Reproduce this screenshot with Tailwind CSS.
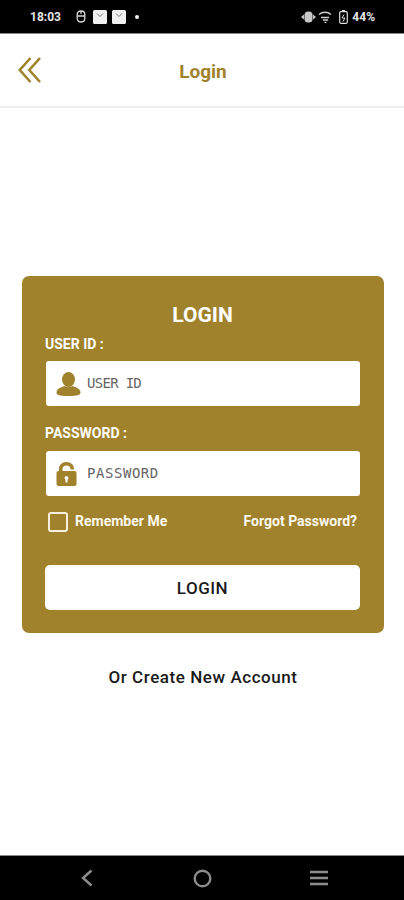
<!DOCTYPE html>
<html lang="en">
<head>
    <meta charset="UTF-8">
    <meta name="viewport" content="width=device-width, initial-scale=1.0">
    <title>Login</title>
    <script src="https://cdn.jsdelivr.net/npm/@tailwindcss/browser@4"></script>
</head>
<body class="bg-white font-['Roboto',sans-serif]">
<div class="flex h-[900px] w-[404px] flex-col overflow-hidden">

    <!-- Status bar -->
    <div class="flex h-[34px] shrink-0 items-center justify-between border-b border-[#8a8a8a] bg-black pr-[29px] pl-[30px] text-[12px] font-bold text-[#e4e4e4]">
        <div class="flex items-center">
            <span class="w-[33px]">18:03</span>
            <svg class="ml-[13px] h-[13px] w-[10px]" viewBox="0 0 10 13" fill="none" stroke="#d8d8d8" stroke-width="1.3"><rect x="1.2" y="1" width="7.6" height="11" rx="3.4"/><path d="M1.2 6h7.6M5 1v3"/></svg>
            <svg class="ml-[7px] h-[14px] w-[14px]" viewBox="0 0 14 14"><rect width="14" height="14" rx="1.5" fill="#f0f0f0"/><path d="M4 3.500l3 3 3-3" fill="none" stroke="#777" stroke-width="1"/></svg>
            <svg class="ml-[5px] h-[14px] w-[14px]" viewBox="0 0 14 14"><rect width="14" height="14" rx="1.5" fill="#f0f0f0"/><path d="M4 3.500l3 3 3-3" fill="none" stroke="#777" stroke-width="1"/></svg>
            <span class="ml-[9px] h-[4px] w-[4px] rounded-full bg-[#eeeeee]"></span>
        </div>
        <div class="flex items-center">
            <svg class="h-[12px] w-[15px]" viewBox="0 0 15 12" fill="#c8c8c8"><path d="M0 6l3-2.500v5zM15 6l-3-2.500v5z"/><rect x="3.500" y="0.500" width="8" height="11" rx="3.500"/></svg>
            <svg class="ml-[2px] h-[12px] w-[14px]" viewBox="0 0 14 12" fill="none" stroke="#d0d0d0" stroke-width="1.400"><path d="M1 3.500C4.500.5 9.500.5 13 3.500M3 6.500h8M5 9h5M6.500 11.500h2"/></svg>
            <svg class="ml-[7px] h-[14px] w-[9px]" viewBox="0 0 9 14" fill="none" stroke="#e0e0e0" stroke-width="1.200"><rect x="0.700" y="1.700" width="7.600" height="11.600" rx="1.200"/><path d="M3 .6h3"/><path d="M5 4.500L3 8h3l-2 3.500" stroke-width="1"/></svg>
            <span class="ml-[4px]">44%</span>
        </div>
    </div>

    <!-- Header -->
    <header class="relative flex h-[74px] shrink-0 items-center justify-center border-b-2 border-[#eeeeee] bg-white pt-[5px] pl-[2px]">
        <svg class="absolute top-[23px] left-[18px] h-[26px] w-[23px]" viewBox="0 0 23 26" fill="none" stroke="#a0822c" stroke-width="2.600">
            <path d="M12.500 1L1.800 13l10.700 12M22 1L11.300 13 22 25"/>
        </svg>
        <h1 class="text-[19px] font-bold text-[#a0822c]">Login</h1>
    </header>

    <main class="flex-1 bg-white pt-[168px] pr-[20px] pl-[22px]">
        <!-- Login card -->
        <div class="h-[357px] rounded-[7px] bg-[#a0822c] pt-[25px] pr-[24px] pl-[23px]">
            <h2 class="text-center text-[21px] leading-[28px] font-bold text-white">LOGIN</h2>

            <label class="mt-[5px] block text-[14px] leading-[20px] font-bold text-white">USER ID :</label>
            <div class="mt-[7px] ml-px flex h-[45px] items-center rounded-[3px] bg-white pl-[10px]">
                <svg class="h-[24px] w-[25px]" viewBox="0 0 25 24" fill="#a0822c"><ellipse cx="12.500" cy="7.500" rx="6.500" ry="7.500"/><path d="M0.500 20.500c0-4 5-5.500 8-6.500 2.500 1.500 5.500 1.500 8 0 3 1 8 2.500 8 6.500 0 2.500-3 3.500-12 3.500S0.500 23 .5 20.500z"/></svg>
                <span class="ml-[6px] font-['DejaVu_Sans_Mono',monospace] text-[14px] tracking-[-0.7px] text-[#666666]">USER ID</span>
            </div>

            <label class="mt-[17px] block text-[14px] leading-[20px] font-bold text-white">PASSWORD :</label>
            <div class="mt-[8px] ml-px flex h-[45px] items-center rounded-[3px] bg-white pl-[10px]">
                <svg class="h-[24px] w-[21px]" viewBox="0 0 21 24" fill="#a0822c"><path d="M3 10V7C3 3 6 0 10.500 0S18 3 18 7v.5h-3.500V7c0-2-1.500-3.500-4-3.500S6.500 5 6.500 7v3z"/><path fill-rule="evenodd" d="M2.500 9h16c1.200 0 2 .8 2 2v11c0 1.200-.8 2-2 2h-16c-1.200 0-2-.8-2-2V11c0-1.200.8-2 2-2zM10.500 14a2 2 0 0 0-1 3.700V20.500h2v-2.800a2 2 0 0 0-1-3.700z"/></svg>
                <span class="ml-[10px] font-['DejaVu_Sans_Mono',monospace] text-[14px] tracking-[0.55px] text-[#666666]">PASSWORD</span>
            </div>

            <div class="mt-[15px] flex items-center justify-between pr-[3px] pl-[3px]">
                <div class="flex items-center">
                    <span class="h-[20px] w-[20px] rounded-[3px] border-2 border-[#f5efdc]"></span>
                    <span class="ml-[7px] text-[14px] font-bold text-[#fbf8ee]">Remember Me</span>
                </div>
                <a class="text-[14px] font-bold text-[#fbf8ee]">Forgot Password?</a>
            </div>

            <button class="mt-[33px] flex h-[45px] w-full items-center justify-center rounded-[5px] bg-white pt-[2px] text-[17px] font-medium tracking-[0.5px] text-[#1a1a1a]">LOGIN</button>
        </div>

        <p class="mt-[34px] text-center text-[17px] leading-[20px] font-medium tracking-[0.55px] text-[#1a1a1a]">Or Create New Account</p>
    </main>

    <!-- Nav bar -->
    <nav class="relative flex h-[45px] shrink-0 items-center justify-between border-t border-[#8a8a8a] bg-black pr-[76px] pl-[81px]">
        <svg class="h-[18px] w-[12px]" viewBox="0 0 12 18" fill="none" stroke="#8c8c8c" stroke-width="2.400"><path d="M10.500 1.500L2 9l8.500 7.500"/></svg>
        <svg class="ml-[2px] h-[19px] w-[19px]" viewBox="0 0 19 19" fill="none" stroke="#8c8c8c" stroke-width="2.400"><circle cx="9.500" cy="9.500" r="7.800"/></svg>
        <svg class="h-[16px] w-[18px]" viewBox="0 0 18 16" fill="none" stroke="#8c8c8c" stroke-width="2.600"><path d="M0 2h18M0 8h18M0 14h18"/></svg>
    </nav>
</div>
</body>
</html>
